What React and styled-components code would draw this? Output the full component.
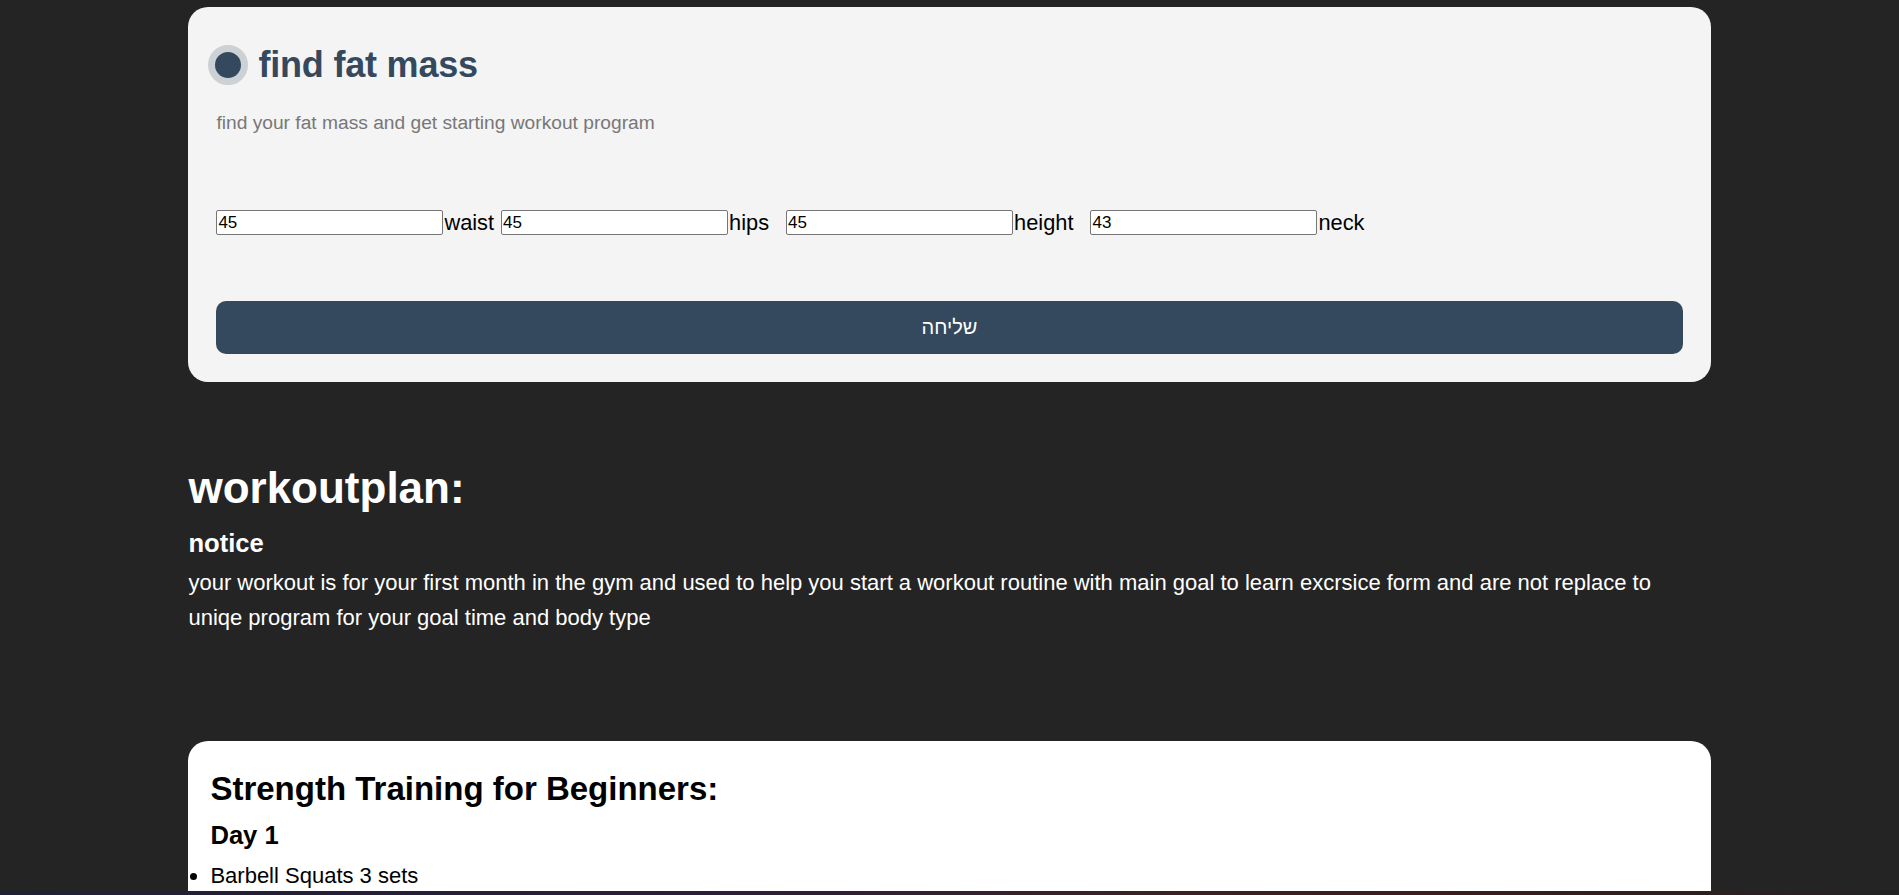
import React from 'react'
import styled, { createGlobalStyle } from 'styled-components'

const GlobalStyle = createGlobalStyle`
  html {
    scrollbar-width: none;
  }
  html::-webkit-scrollbar {
    display: none;
  }
  body {
    margin: 0;
    background: #242424;
    font-family: 'Liberation Sans', Arial, sans-serif;
  }
`

const Page = styled.div`
  padding-top: 7px;
  padding-bottom: 40px;
`

const FormCard = styled.section`
  width: calc(80% + 3px);
  margin: 0 auto;
  box-sizing: border-box;
  background: #f4f4f4;
  border-radius: 20px;
  padding: 38px 28px 28px;
`

const Header = styled.div`
  display: flex;
  align-items: center;
  gap: 10px;
  margin-left: -8px;
`

const Dot = styled.span`
  display: block;
  width: 26px;
  height: 26px;
  border-radius: 50%;
  background: #34495e;
  border: 7px solid #ccd1d6;
  flex-shrink: 0;
`

const Title = styled.h1`
  margin: 0;
  font-size: 36px;
  line-height: 40px;
  font-weight: 700;
  color: #34495e;
  letter-spacing: -0.2px;
`

const Subtitle = styled.p`
  margin: 27px 0 0;
  font-size: 19.2px;
  line-height: 22px;
  color: #777;
`

const FieldRow = styled.div`
  display: flex;
  align-items: center;
  margin-top: 76px;
`

const Field = styled.div`
  display: flex;
  align-items: center;
  margin-right: ${p => p.$space}px;
`

const NumberInput = styled.input`
  box-sizing: border-box;
  width: 227px;
  height: 24.5px;
  padding: 1px 1px;
  border: 1px solid #767676;
  border-radius: 2px;
  background: #fff;
  font-family: 'Liberation Sans', Arial, sans-serif;
  font-size: 17px;
  color: #000;
  outline: none;
`

const Label = styled.label`
  margin-left: 1px;
  font-size: 21.8px;
  line-height: 25px;
  color: #000;
`

const SubmitButton = styled.button`
  display: block;
  width: 100%;
  height: 53px;
  margin-top: 66px;
  border: none;
  border-radius: 10px;
  background: #34495e;
  color: #fff;
  font-family: 'Liberation Sans', 'DejaVu Sans', Arial, sans-serif;
  font-size: 20px;
  cursor: pointer;
`

const Plan = styled.section`
  width: calc(80% + 3px);
  margin: 81px auto 0;
  color: #fff;
`

const PlanTitle = styled.h2`
  margin: 0;
  font-size: 44px;
  font-weight: 700;
  line-height: 50.6px;
`

const NoticeTitle = styled.h3`
  margin: 15px 0 0;
  font-size: 25.6px;
  font-weight: 700;
  line-height: 29.4px;
`

const NoticeText = styled.p`
  margin: 7px 0 0;
  font-size: 22px;
  line-height: 35px;
`

const ProgramCard = styled.section`
  width: calc(80% + 3px);
  margin: 106px auto 0;
  box-sizing: border-box;
  background: #fff;
  border-radius: 20px;
  padding: 29px 22px 24px;
  color: #000;
`

const ProgramTitle = styled.h2`
  margin: 0;
  font-size: 33px;
  font-weight: 700;
  line-height: 37px;
`

const DayTitle = styled.h3`
  margin: 14px 0 0;
  font-size: 25.6px;
  font-weight: 700;
  line-height: 29.4px;
`

const ExerciseList = styled.ul`
  margin: 12.5px 0 0;
  padding: 0;
  list-style: disc outside;

  li {
    font-size: 22px;
    line-height: 25.3px;
  }
`

const BottomEdge = styled.div`
  position: fixed;
  left: 0;
  right: 0;
  bottom: 0;
  height: 4px;
  background: linear-gradient(90deg, #1f2033 0%, #2a1f3a 35%, #3a2226 60%, #3d1c1e 75%, #222 100%);
`

const fields = [
  { name: 'waist', value: '45', space: 7 },
  { name: 'hips', value: '45', space: 17 },
  { name: 'height', value: '45', space: 17 },
  { name: 'neck', value: '43', space: 0 },
]

const days = [
  {
    title: 'Day 1',
    items: ['Barbell Squats 3 sets'],
  },
]

export default function App() {
  return (
    <Page>
      <GlobalStyle />
      <FormCard>
        <Header>
          <Dot />
          <Title>find fat mass</Title>
        </Header>
        <Subtitle>find your fat mass and get starting workout program</Subtitle>

        <FieldRow>
          {fields.map(f => (
            <Field key={f.name} $space={f.space}>
              <NumberInput type="text" defaultValue={f.value} id={f.name} />
              <Label htmlFor={f.name}>{f.name}</Label>
            </Field>
          ))}
        </FieldRow>

        <SubmitButton type="button">שליחה</SubmitButton>
      </FormCard>

      <Plan>
        <PlanTitle>workoutplan:</PlanTitle>
        <NoticeTitle>notice</NoticeTitle>
        <NoticeText>
          your workout is for your first month in the gym and used to help you start a workout routine
          with main goal to learn excrsice form and are not replace to uniqe program for your goal time
          and body type
        </NoticeText>
      </Plan>

      <ProgramCard>
        <ProgramTitle>Strength Training for Beginners:</ProgramTitle>
        {days.map(day => (
          <div key={day.title}>
            <DayTitle>{day.title}</DayTitle>
            <ExerciseList>
              {day.items.map(item => (
                <li key={item}>{item}</li>
              ))}
            </ExerciseList>
          </div>
        ))}
      </ProgramCard>

      <BottomEdge />
    </Page>
  )
}
